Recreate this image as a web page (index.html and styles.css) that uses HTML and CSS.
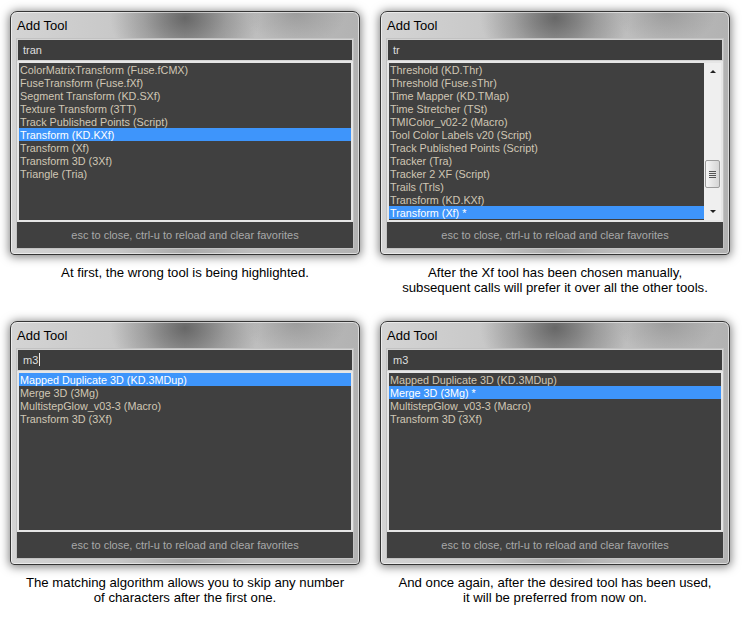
FILE: index.html
```html
<!DOCTYPE html>
<html>
<head>
<meta charset="utf-8">
<link rel="stylesheet" href="styles.css">
</head>
<body>
<div class="grid">
  <section class="cell">
    <div class="dialog">
      <div class="title">Add Tool</div>
      <div class="panel">
        <div class="input">tran</div>
        <div class="list">
          <div class="rows">
            <div class="row">ColorMatrixTransform (Fuse.fCMX)</div>
            <div class="row">FuseTransform (Fuse.fXf)</div>
            <div class="row">Segment Transform (KD.SXf)</div>
            <div class="row">Texture Transform (3TT)</div>
            <div class="row">Track Published Points (Script)</div>
            <div class="row sel">Transform (KD.KXf)</div>
            <div class="row">Transform (Xf)</div>
            <div class="row">Transform 3D (3Xf)</div>
            <div class="row">Triangle (Tria)</div>
          </div>
        </div>
        <div class="footer">esc to close, ctrl-u to reload and clear favorites</div>
      </div>
    </div>
    <p class="caption">At first, the wrong tool is being highlighted.</p>
  </section>

  <section class="cell">
    <div class="dialog">
      <div class="title">Add Tool</div>
      <div class="panel">
        <div class="input">tr</div>
        <div class="list">
          <div class="rows">
            <div class="row">Threshold (KD.Thr)</div>
            <div class="row">Threshold (Fuse.sThr)</div>
            <div class="row">Time Mapper (KD.TMap)</div>
            <div class="row">Time Stretcher (TSt)</div>
            <div class="row">TMIColor_v02-2 (Macro)</div>
            <div class="row">Tool Color Labels v20 (Script)</div>
            <div class="row">Track Published Points (Script)</div>
            <div class="row">Tracker (Tra)</div>
            <div class="row">Tracker 2 XF (Script)</div>
            <div class="row">Trails (Trls)</div>
            <div class="row">Transform (KD.KXf)</div>
            <div class="row sel">Transform (Xf) *</div>
          </div>
          <div class="sb">
            <div class="sb-btn"><span class="arrow-up"></span></div>
            <div class="sb-track">
              <div class="sb-thumb"><span></span><span></span><span></span><span></span></div>
            </div>
            <div class="sb-btn"><span class="arrow-down"></span></div>
          </div>
        </div>
        <div class="footer">esc to close, ctrl-u to reload and clear favorites</div>
      </div>
    </div>
    <p class="caption">After the Xf tool has been chosen manually,<br>subsequent calls will prefer it over all the other tools.</p>
  </section>

  <section class="cell">
    <div class="dialog">
      <div class="title">Add Tool</div>
      <div class="panel">
        <div class="input">m3<span class="caret"></span></div>
        <div class="list">
          <div class="rows">
            <div class="row sel">Mapped Duplicate 3D (KD.3MDup)</div>
            <div class="row">Merge 3D (3Mg)</div>
            <div class="row">MultistepGlow_v03-3 (Macro)</div>
            <div class="row">Transform 3D (3Xf)</div>
          </div>
        </div>
        <div class="footer">esc to close, ctrl-u to reload and clear favorites</div>
      </div>
    </div>
    <p class="caption">The matching algorithm allows you to skip any number<br>of characters after the first one.</p>
  </section>

  <section class="cell">
    <div class="dialog">
      <div class="title">Add Tool</div>
      <div class="panel">
        <div class="input">m3</div>
        <div class="list">
          <div class="rows">
            <div class="row">Mapped Duplicate 3D (KD.3MDup)</div>
            <div class="row sel">Merge 3D (3Mg) *</div>
            <div class="row">MultistepGlow_v03-3 (Macro)</div>
            <div class="row">Transform 3D (3Xf)</div>
          </div>
        </div>
        <div class="footer">esc to close, ctrl-u to reload and clear favorites</div>
      </div>
    </div>
    <p class="caption">And once again, after the desired tool has been used,<br>it will be preferred from now on.</p>
  </section>
</div>
</body>
</html>
```

FILE: styles.css
```css
html, body {
  margin: 0;
  padding: 0;
  background: #ffffff;
}

body {
  font-family: "Liberation Sans", Arial, sans-serif;
  width: 742px;
  height: 624px;
  overflow: hidden;
}

.grid {
  display: grid;
  grid-template-columns: 370px 370px;
  grid-template-rows: 310px 314px;
}

.cell {
  padding: 11px 0 0 10px;
  width: 350px;
}

.dialog {
  width: 350px;
  height: 244px;
  box-sizing: border-box;
  display: flex;
  flex-direction: column;
  padding: 0 5px 5px 5px;
  border: 1px solid #353535;
  border-radius: 7px 7px 4px 4px;
  background:
    radial-gradient(ellipse 75px 55px at 50% 6px, rgba(75, 75, 75, 0.7), rgba(75, 75, 75, 0.25) 55%, rgba(75, 75, 75, 0) 100%),
    radial-gradient(ellipse 50px 35px at 82% 0px, rgba(120, 120, 120, 0.45), rgba(120, 120, 120, 0) 100%),
    linear-gradient(to right, #d4d4d4 0%, #c8c8c8 30%, #aaaaaa 50%, #bebebe 70%, #b2b2b2 100%);
  box-shadow:
    inset 0 0 0 1px rgba(255, 255, 255, 0.55),
    0 1px 10px 1px rgba(0, 0, 0, 0.5);
}

.title {
  height: 26px;
  line-height: 27px;
  padding-left: 1px;
  font-size: 13px;
  color: #000;
  flex: none;
}

.panel {
  flex: 1;
  display: flex;
  flex-direction: column;
  background: #404040;
  border: 1px solid #c2c2c2;
}

.input {
  flex: none;
  height: 22px;
  box-sizing: border-box;
  border: 1px solid #d4d4d4;
  background: #3d3d3d;
  padding-left: 5px;
  line-height: 20px;
  font-size: 11px;
  color: #dedede;
}

.caret {
  display: inline-block;
  width: 1px;
  height: 13px;
  background: #e8e8e8;
  vertical-align: -2px;
  margin-left: 1px;
}

.list {
  flex: none;
  height: 161px;
  box-sizing: border-box;
  border: 2px solid #e6e6e6;
  display: flex;
}

.rows {
  flex: 1;
  min-width: 0;
}

.row {
  height: 13px;
  line-height: 14px;
  padding-left: 1px;
  font-size: 10.8px;
  color: #d0c7b5;
  white-space: nowrap;
  overflow: hidden;
}

.row.sel {
  background: #3e95fb;
  color: #ffffff;
}

.footer {
  flex: 1;
  display: flex;
  align-items: center;
  justify-content: center;
  font-size: 11px;
  color: #a9a9a9;
}

.sb {
  flex: none;
  width: 17px;
  background: #efefef;
  display: flex;
  flex-direction: column;
}

.sb-btn {
  height: 17px;
  display: flex;
  align-items: center;
  justify-content: center;
  flex: none;
}

.arrow-up {
  width: 0;
  height: 0;
  border-left: 3px solid transparent;
  border-right: 3px solid transparent;
  border-bottom: 3px solid #222;
}

.arrow-down {
  width: 0;
  height: 0;
  border-left: 3px solid transparent;
  border-right: 3px solid transparent;
  border-top: 3px solid #222;
}

.sb-track {
  flex: 1;
}

.sb-thumb {
  margin: 80px 1px 0 1px;
  height: 28px;
  box-sizing: border-box;
  border: 1px solid #9c9c9c;
  border-radius: 2px;
  background: linear-gradient(to right, #f6f6f6, #e2e2e2 60%, #d6d6d6);
  display: flex;
  flex-direction: column;
  align-items: center;
  justify-content: center;
  gap: 1px;
}

.sb-thumb span {
  display: block;
  width: 7px;
  height: 1px;
  background: #555;
}

.caption {
  margin: 10px 0 0 0;
  width: 350px;
  text-align: center;
  font-size: 13.2px;
  line-height: 15px;
  color: #000;
}
```
